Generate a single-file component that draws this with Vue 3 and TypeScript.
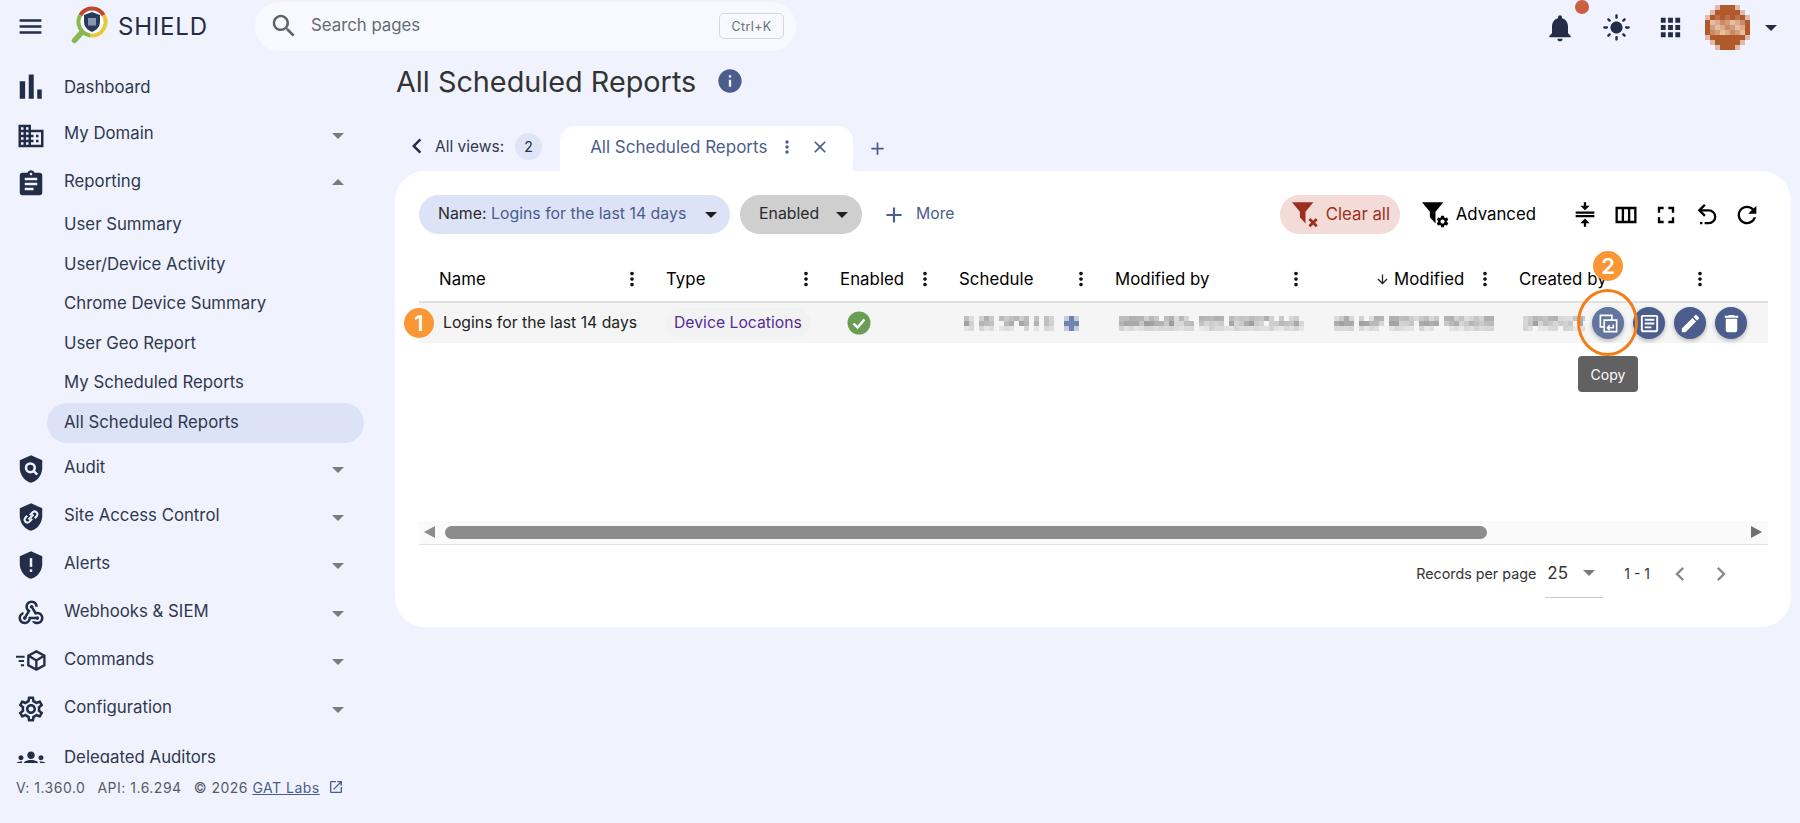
<script setup lang="ts">
const P = {
  menu: 'M3 18h18v-2H3v2zm0-5h18v-2H3v2zm0-7v2h18V6H3z',
  search: 'M15.5 14h-.79l-.28-.27C15.41 12.59 16 11.11 16 9.5 16 5.91 13.09 3 9.5 3S3 5.91 3 9.5 5.91 16 9.5 16c1.61 0 3.09-.59 4.23-1.57l.27.28v.79l5 4.99L20.49 19l-4.99-5zm-6 0C7.01 14 5 11.99 5 9.5S7.01 5 9.5 5 14 7.01 14 9.5 11.99 14 9.5 14z',
  bars: 'M3 5.8h4.3v14H3zM10.2.4h4v19.4h-4zM17 12.4h3.6v7.4H17z',
  domain: 'M12 7V3H2v18h20V7H12zM6 19H4v-2h2v2zm0-4H4v-2h2v2zm0-4H4V9h2v2zm0-4H4V5h2v2zm4 12H8v-2h2v2zm0-4H8v-2h2v2zm0-4H8V9h2v2zm0-4H8V5h2v2zm10 12h-8v-2h2v-2h-2v-2h2v-2h-2V9h8v10zm-2-8h-2v2h2v-2zm0 4h-2v2h2v-2z',
  assignment: 'M19 3h-4.18C14.4 1.84 13.3 1 12 1c-1.3 0-2.4.84-2.82 2H5c-1.1 0-2 .9-2 2v14c0 1.1.9 2 2 2h14c1.1 0 2-.9 2-2V5c0-1.1-.9-2-2-2zm-7 0c.55 0 1 .45 1 1s-.45 1-1 1-1-.45-1-1 .45-1 1-1zm2 14H7v-2h7v2zm3-4H7v-2h10v2zm0-4H7V7h10v2z',
  webhook: 'M10 15h5.88c.27-.31.67-.5 1.12-.5.83 0 1.5.67 1.5 1.5s-.67 1.5-1.5 1.5c-.44 0-.84-.19-1.12-.5H11.9c-.46 2.28-2.48 4-4.9 4-2.76 0-5-2.24-5-5 0-2.42 1.72-4.44 4-4.9v2.07c-1.16.41-2 1.53-2 2.83 0 1.65 1.35 3 3 3s3-1.35 3-3v-1zm2.5-11c1.65 0 3 1.35 3 3h2c0-2.76-2.24-5-5-5s-5 2.24-5 5c0 1.43.6 2.71 1.55 3.62l-2.35 3.9c-.68.14-1.2.75-1.2 1.48 0 .83.67 1.5 1.5 1.5s1.5-.67 1.5-1.5c0-.16-.02-.31-.07-.45l3.38-5.63C10.49 9.61 9.5 8.42 9.5 7c0-1.65 1.35-3 3-3zm4.5 9c-.64 0-1.23.2-1.72.54l-3.05-5.07C11.53 8.35 11 7.74 11 7c0-.83.67-1.5 1.5-1.5S14 6.17 14 7c0 .15-.02.29-.06.43l2.19 3.65c.28-.05.57-.08.87-.08 2.76 0 5 2.24 5 5s-2.24 5-5 5c-1.85 0-3.47-1.01-4.33-2.5h2.67c.48.32 1.05.5 1.66.5 1.65 0 3-1.35 3-3s-1.35-3-3-3z',
  settings: 'M19.43 12.98c.04-.32.07-.64.07-.98 0-.34-.03-.66-.07-.98l2.11-1.65c.19-.15.24-.42.12-.64l-2-3.46c-.09-.16-.26-.25-.44-.25-.06 0-.12.01-.17.03l-2.49 1c-.52-.4-1.08-.73-1.69-.98l-.38-2.65C14.46 2.18 14.25 2 14 2h-4c-.25 0-.46.18-.49.42l-.38 2.65c-.61.25-1.17.59-1.69.98l-2.49-1c-.06-.02-.12-.03-.18-.03-.17 0-.34.09-.43.25l-2 3.46c-.13.22-.07.49.12.64l2.11 1.65c-.04.32-.07.65-.07.98 0 .33.03.66.07.98l-2.11 1.65c-.19.15-.24.42-.12.64l2 3.46c.09.16.26.25.44.25.06 0 .12-.01.17-.03l2.49-1c.52.4 1.08.73 1.69.98l.38 2.65c.03.24.24.42.49.42h4c.25 0 .46-.18.49-.42l.38-2.65c.61-.25 1.17-.59 1.69-.98l2.49 1c.06.02.12.03.18.03.17 0 .34-.09.43-.25l2-3.46c.12-.22.07-.49-.12-.64l-2.11-1.65zm-1.98-1.71c.04.31.05.52.05.73 0 .21-.02.43-.05.73l-.14 1.13.89.7 1.08.84-.7 1.21-1.27-.51-1.04-.42-.9.68c-.43.32-.84.56-1.25.73l-1.06.43-.16 1.13-.2 1.35h-1.4l-.19-1.35-.16-1.13-1.06-.43c-.43-.18-.83-.41-1.23-.71l-.91-.7-1.06.43-1.27.51-.7-1.21 1.08-.84.89-.7-.14-1.13c-.03-.31-.05-.54-.05-.74s.02-.43.05-.73l.14-1.13-.89-.7-1.08-.84.7-1.21 1.27.51 1.04.42.9-.68c.43-.32.84-.56 1.25-.73l1.06-.43.16-1.13.2-1.35h1.39l.19 1.35.16 1.13 1.06.43c.43.18.83.41 1.23.71l.91.7 1.06-.43 1.27-.51.7 1.21-1.07.85-.89.7.14 1.13zM12 8c-2.21 0-4 1.79-4 4s1.79 4 4 4 4-1.79 4-4-1.79-4-4-4zm0 6c-1.1 0-2-.9-2-2s.9-2 2-2 2 .9 2 2-.9 2-2 2z',
  groups: 'M4 13c1.1 0 2-.9 2-2s-.9-2-2-2-2 .9-2 2 .9 2 2 2zm1.13 1.1c-.37-.06-.74-.1-1.13-.1-.99 0-1.93.21-2.78.58C.48 14.9 0 15.62 0 16.43V18h4.5v-1.61c0-.83.23-1.61.63-2.29zM20 13c1.1 0 2-.9 2-2s-.9-2-2-2-2 .9-2 2 .9 2 2 2zm4 3.43c0-.81-.48-1.53-1.22-1.85-.85-.37-1.79-.58-2.78-.58-.39 0-.76.04-1.13.1.4.68.63 1.46.63 2.29V18H24v-1.57zm-7.76-2.78c-1.17-.52-2.61-.9-4.24-.9-1.63 0-3.07.39-4.24.9C6.68 14.13 6 15.21 6 16.39V18h12v-1.61c0-1.18-.68-2.26-1.76-2.74zM12 12c1.66 0 3-1.34 3-3s-1.34-3-3-3-3 1.34-3 3 1.34 3 3 3z',
  bell: 'M12 22c1.1 0 2-.9 2-2h-4c0 1.1.9 2 2 2zm6-6v-5c0-3.07-1.63-5.64-4.5-6.32V4c0-.83-.67-1.5-1.5-1.5s-1.5.67-1.5 1.5v.68C7.64 5.36 6 7.92 6 11v5l-2 2v1h16v-1l-2-2z',
  sun: 'M12 7c-2.76 0-5 2.24-5 5s2.24 5 5 5 5-2.24 5-5-2.24-5-5-5zM2 13h2c.55 0 1-.45 1-1s-.45-1-1-1H2c-.55 0-1 .45-1 1s.45 1 1 1zm18 0h2c.55 0 1-.45 1-1s-.45-1-1-1h-2c-.55 0-1 .45-1 1s.45 1 1 1zM11 2v2c0 .55.45 1 1 1s1-.45 1-1V2c0-.55-.45-1-1-1s-1 .45-1 1zm0 18v2c0 .55.45 1 1 1s1-.45 1-1v-2c0-.55-.45-1-1-1s-1 .45-1 1zM5.99 4.58c-.39-.39-1.03-.39-1.41 0-.39.39-.39 1.03 0 1.41l1.06 1.06c.39.39 1.03.39 1.41 0s.39-1.03 0-1.41L5.99 4.58zm12.37 12.37c-.39-.39-1.03-.39-1.41 0-.39.39-.39 1.03 0 1.41l1.06 1.06c.39.39 1.03.39 1.41 0 .39-.39.39-1.03 0-1.41l-1.06-1.06zm1.06-10.96c.39-.39.39-1.03 0-1.41-.39-.39-1.03-.39-1.41 0l-1.06 1.06c-.39.39-.39 1.03 0 1.41s1.03.39 1.41 0l1.06-1.06zM7.05 18.36c.39-.39.39-1.03 0-1.41-.39-.39-1.03-.39-1.41 0l-1.06 1.06c-.39.39-.39 1.03 0 1.41s1.03.39 1.41 0l1.06-1.06z',
  apps: 'M4 8h4V4H4v4zm6 12h4v-4h-4v4zm-6 0h4v-4H4v4zm0-6h4v-4H4v4zm6 0h4v-4h-4v4zm6-10v4h4V4h-4zm-6 4h4V4h-4v4zm6 6h4v-4h-4v4zm0 6h4v-4h-4v4z',
  info: 'M12 2C6.48 2 2 6.48 2 12s4.48 10 10 10 10-4.48 10-10S17.52 2 12 2zm1 15h-2v-6h2v6zm0-8h-2V7h2v2z',
  left: 'M15.41 7.41L14 6l-6 6 6 6 1.41-1.41L10.83 12z',
  right: 'M10 6L8.59 7.41 13.17 12l-4.58 4.59L10 18l6-6z',
  close: 'M19 6.41L17.59 5 12 10.59 6.41 5 5 6.41 10.59 12 5 17.59 6.41 19 12 13.41 17.59 19 19 17.59 13.41 12z',
  add: 'M19 13h-6v6h-2v-6H5v-2h6V5h2v6h6v2z',
  kebab: 'M12 8c1.1 0 2-.9 2-2s-.9-2-2-2-2 .9-2 2 .9 2 2 2zm0 2c-1.1 0-2 .9-2 2s.9 2 2 2 2-.9 2-2-.9-2-2-2zm0 6c-1.1 0-2 .9-2 2s.9 2 2 2 2-.9 2-2-.9-2-2-2z',
  down: 'M20 12l-1.41-1.41L13 16.17V4h-2v12.17l-5.58-5.59L4 12l8 8 8-8z',
  compress: 'M8 19h3v3h2v-3h3l-4-4-4 4zm8-15h-3V1h-2v3H8l4 4 4-4zM4 9v2h16V9H4zm0 3h16v2H4v-2z',
  columns: 'M3 5v14h18V5H3zm5.33 12H5V7h3.33v10zm5.34 0h-3.33V7h3.33v10zM19 17h-3.33V7H19v10z',
  fullscreen: 'M7 14H5v5h5v-2H7v-3zm-2-4h2V7h3V5H5v5zm12 7h-3v2h5v-5h-2v3zM14 5v2h3v3h2V5h-5z',
  undo: 'M13.5 7A6.5 6.5 0 0 1 20 13.5 6.5 6.5 0 0 1 13.5 20H10v-2h3.5c2.5 0 4.5-2 4.5-4.5S16 9 13.5 9H7.83l3.08 3.09L9.5 13.5 4 8l5.5-5.5 1.42 1.41L7.83 7h5.67M6 18h2v2H6v-2z',
  refresh: 'M17.65 6.35C16.2 4.9 14.21 4 12 4c-4.42 0-7.99 3.58-7.99 8s3.57 8 7.99 8c3.73 0 6.84-2.55 7.73-6h-2.08c-.82 2.33-3.04 4-5.65 4-3.31 0-6-2.69-6-6s2.69-6 6-6c1.66 0 3.14.69 4.22 1.78L13 11h7V4l-2.35 2.35z',
  del: 'M6 19c0 1.1.9 2 2 2h8c1.1 0 2-.9 2-2V7H6v12zM19 4h-3.5l-1-1h-5l-1 1H5v2h14V4z',
  edit: 'M3 17.25V21h3.75L17.81 9.94l-3.75-3.75L3 17.25zM20.71 7.04c.39-.39.39-1.02 0-1.41l-2.34-2.34c-.39-.39-1.02-.39-1.41 0l-1.83 1.83 3.75 3.75 1.83-1.83z',
  article: 'M19 5v14H5V5h14m0-2H5c-1.1 0-2 .9-2 2v14c0 1.1.9 2 2 2h14c1.1 0 2-.9 2-2V5c0-1.1-.9-2-2-2zM14 17H7v-2h7v2zm3-4H7v-2h10v2zm0-4H7V7h10v2z',
  ext: 'M19 19H5V5h7V3H5c-1.11 0-2 .9-2 2v14c0 1.1.89 2 2 2h14c1.1 0 2-.9 2-2v-7h-2v7zM14 3v2h3.59l-9.83 9.83 1.41 1.41L19 6.41V10h2V3h-7z',
  shield: 'M12 1L3 5v6c0 5.55 3.84 10.74 9 12 5.16-1.26 9-6.45 9-12V5l-9-4z',
  funnel: 'M2 3h19l-7 8.500V22l-5-5.500V11.500z',
  gear: 'M19.43 12.98c.04-.32.07-.64.07-.98 0-.34-.03-.66-.07-.98l2.11-1.65c.19-.15.24-.42.12-.64l-2-3.46c-.12-.22-.39-.3-.61-.22l-2.49 1c-.52-.4-1.08-.73-1.69-.98l-.38-2.65C14.46 2.18 14.25 2 14 2h-4c-.25 0-.46.18-.49.42l-.38 2.65c-.61.25-1.17.59-1.69.98l-2.49-1c-.23-.09-.49 0-.61.22l-2 3.46c-.13.22-.07.49.12.64l2.11 1.65c-.04.32-.07.65-.07.98 0 .33.03.66.07.98l-2.11 1.65c-.19.15-.24.42-.12.64l2 3.46c.12.22.39.3.61.22l2.49-1c.52.4 1.08.73 1.69.98l.38 2.65c.03.24.24.42.49.42h4c.25 0 .46-.18.49-.42l.38-2.65c.61-.25 1.17-.59 1.69-.98l2.49 1c.23.09.49 0 .61-.22l2-3.46c.12-.22.07-.49-.12-.64l-2.11-1.65zM12 15.5c-1.93 0-3.5-1.57-3.5-3.5s1.57-3.5 3.5-3.5 3.5 1.57 3.5 3.5-1.57 3.5-3.5 3.5z'
}

const columns = [
  { label: 'Type', w: 174 },
  { label: 'Enabled', w: 119 },
  { label: 'Schedule', w: 156 },
  { label: 'Modified by', w: 215 }
]

// small deterministic noise for the pixelated (redacted) cells
function mosaic(w: number, rows: number, seed: number, gaps: number[] = []) {
  const cell = 5
  const out: { x: number; y: number; o: number }[] = []
  let s = seed
  for (let x = 0; x < w; x += cell) {
    for (let y = 0; y < rows; y++) {
      s = (s * 9301 + 49297) % 233280
      const r = s / 233280
      if (gaps.includes(x)) continue
      const edge = y === 2 ? 0.4 : y === 0 ? 0.8 : 1
      if (r < 0.1) continue
      out.push({ x, y: y * cell, o: (0.14 + r * 0.42) * edge })
    }
  }
  return out
}
const blurs = {
  sched: mosaic(90, 3, 11, [10, 30, 65, 75]),
  modBy: mosaic(185, 3, 37, [75]),
  mod: mosaic(160, 3, 73, [20, 50, 105]),
  created: mosaic(62, 3, 101)
}

const avatar: { x: number; y: number; c: string }[] = (() => {
  const out: { x: number; y: number; c: string }[] = []
  const cell = 5
  for (let r = 0; r < 9; r++) {
    for (let c = 0; c < 9; c++) {
      const dx = c - 4, dy = r - 4
      const d = Math.sqrt(dx * dx + dy * dy)
      if (d > 4.8) continue
      let col = '#b05a2c'
      if (d > 4.2) col = '#dfb9ac'
      else if (r >= 3 && r <= 5 && Math.abs(dx) <= 3) col = ['#c98a6a', '#d59c76', '#e4bda2', '#dca98a'][(r * 3 + c * 5) % 4]
      else if (r === 2 && Math.abs(dx) <= 2 && c % 2 === 0) col = '#bd7147'
      out.push({ x: c * cell, y: r * cell, c: col })
    }
  }
  return out
})()
</script>

<template>
  <div class="page">
    <header class="topbar">
      <svg class="ic menu-ic" viewBox="0 0 24 24"><path :d="P.menu" /></svg>
      <div class="brand">
        <svg class="logo" viewBox="0 0 40 40">
          <path d="M12 26 L4.500 34.500" stroke="#8ab752" stroke-width="5.500" stroke-linecap="round" fill="none" />
          <circle cx="22" cy="16" r="12" fill="#fff" />
          <path d="M10.300 9.250 A13.500 13.500 0 0 1 33.700 9.250" stroke="#c0452c" stroke-width="4" fill="none" />
          <path d="M33.700 9.250 A13.500 13.500 0 0 1 20.250 29.400" stroke="#e9c937" stroke-width="4" fill="none" />
          <path d="M20.250 29.400 A13.500 13.500 0 0 1 10.300 9.250" stroke="#8ab752" stroke-width="4" fill="none" />
          <path d="M22 6 L30 9 V16 C30 21 26 24.500 22 26 C18 24.500 14 21 14 16 V9 Z" fill="#2a3a5c" />
          <rect x="18" y="12" width="8" height="7.500" fill="#8a97ad" />
        </svg>
        <span class="brand-name">SHIELD</span>
      </div>
      <div class="searchbox">
        <svg class="ic search-ic" viewBox="0 0 24 24"><path :d="P.search" /></svg>
        <span class="search-text">Search pages</span>
        <kbd class="kbd">Ctrl+K</kbd>
      </div>
      <div class="top-actions">
        <div class="bell">
          <svg class="ic bell-ic" viewBox="0 0 24 24"><path :d="P.bell" /></svg>
          <span class="dot"></span>
        </div>
        <svg class="ic sun-ic" viewBox="0 0 24 24"><path :d="P.sun" /></svg>
        <svg class="ic apps-ic" viewBox="0 0 24 24"><path :d="P.apps" /></svg>
        <svg class="avatar" viewBox="0 0 45 45" shape-rendering="crispEdges">
          <rect v-for="(a, i) in avatar" :key="i" :x="a.x" :y="a.y" width="5" height="5" :fill="a.c" />
        </svg>
        <span class="caret dark"></span>
      </div>
    </header>

    <div class="body">
      <aside class="side">
        <nav class="nav">
          <div class="nav-row first">
            <svg class="ic nav-ic" viewBox="0 0 24 24"><path :d="P.bars" /></svg>
            <span>Dashboard</span>
          </div>
          <div class="nav-row">
            <svg class="ic nav-ic" viewBox="0 0 24 24"><path :d="P.domain" /></svg>
            <span>My Domain</span><i class="caret"></i>
          </div>
          <div class="nav-row">
            <svg class="ic nav-ic" viewBox="0 0 24 24"><path :d="P.assignment" /></svg>
            <span>Reporting</span><i class="caret up"></i>
          </div>
          <div class="nav-sub">User Summary</div>
          <div class="nav-sub">User/Device Activity</div>
          <div class="nav-sub">Chrome Device Summary</div>
          <div class="nav-sub">User Geo Report</div>
          <div class="nav-sub">My Scheduled Reports</div>
          <div class="nav-sub active">All Scheduled Reports</div>
          <div class="nav-row">
            <svg class="ic nav-ic" viewBox="0 0 24 24">
              <path :d="P.shield" />
              <circle cx="11.500" cy="11" r="3.500" fill="none" stroke="#f0f3fe" stroke-width="2" />
              <path d="M14 13.500 L17 16.500" stroke="#f0f3fe" stroke-width="2" />
            </svg>
            <span>Audit</span><i class="caret"></i>
          </div>
          <div class="nav-row">
            <svg class="ic nav-ic" viewBox="0 0 24 24">
              <path :d="P.shield" />
              <path d="M11 10.500 L13.500 8 a2.300 2.300 0 0 1 3.200 3.200 L15 13 M13 13.500 L10.500 16 a2.300 2.300 0 0 1 -3.200 -3.200 L9 11 M10 14 L14 10" fill="none" stroke="#f0f3fe" stroke-width="1.600" />
            </svg>
            <span>Site Access Control</span><i class="caret"></i>
          </div>
          <div class="nav-row">
            <svg class="ic nav-ic" viewBox="0 0 24 24">
              <path :d="P.shield" />
              <rect x="11" y="6.500" width="2" height="7" fill="#f0f3fe" />
              <rect x="11" y="15.500" width="2" height="2" fill="#f0f3fe" />
            </svg>
            <span>Alerts</span><i class="caret"></i>
          </div>
          <div class="nav-row">
            <svg class="ic nav-ic" viewBox="0 0 24 24"><path :d="P.webhook" /></svg>
            <span>Webhooks &amp; SIEM</span><i class="caret"></i>
          </div>
          <div class="nav-row">
            <svg class="ic nav-ic" viewBox="0 0 28 28">
              <path d="M19 5 L26.500 9 V18 L19 22 L11.500 18 V9 Z M11.800 9.200 L19 13.500 L26.200 9.200 M19 13.500 V22" fill="none" stroke="#232d47" stroke-width="2.200" />
              <path d="M0 9h8v2H0zM2.500 13h5v2h-5zM4.500 17h3v2h-3z" />
            </svg>
            <span>Commands</span><i class="caret"></i>
          </div>
          <div class="nav-row">
            <svg class="ic nav-ic" viewBox="0 0 24 24"><path :d="P.settings" /></svg>
            <span>Configuration</span><i class="caret"></i>
          </div>
          <div class="nav-row last">
            <svg class="ic nav-ic" viewBox="0 0 24 24"><path :d="P.groups" /></svg>
            <span>Delegated Auditors</span>
          </div>
        </nav>
        <footer class="side-foot">
          <span>V: 1.360.0</span><span>API: 1.6.294</span><span>© 2026 <a class="gat">GAT Labs</a></span>
          <svg class="ext" viewBox="0 0 24 24"><path :d="P.ext" /></svg>
        </footer>
      </aside>

      <main class="main">
        <div class="title-row">
          <h1>All Scheduled Reports</h1>
          <svg class="ic info-ic" viewBox="0 0 24 24"><path :d="P.info" /></svg>
        </div>

        <div class="tabs">
          <svg class="ic back-ic" viewBox="0 0 24 24"><path :d="P.left" /></svg>
          <span class="views">All views:</span>
          <span class="count">2</span>
          <div class="tab">
            <span class="tab-name">All Scheduled Reports</span>
            <svg class="ic tab-kebab" viewBox="0 0 24 24"><path :d="P.kebab" /></svg>
            <svg class="ic tab-close" viewBox="0 0 24 24"><path :d="P.close" /></svg>
          </div>
          <svg class="ic tab-add" viewBox="0 0 24 24"><path :d="P.add" /></svg>
        </div>

        <section class="card">
          <div class="toolbar">
            <div class="chip chip-name">
              <span class="k">Name:</span>&nbsp;<span class="v">Logins for the last 14 days</span>
              <i class="caret black"></i>
            </div>
            <div class="chip chip-en">
              <span>Enabled</span>
              <i class="caret black"></i>
            </div>
            <div class="more">
              <svg class="ic more-ic" viewBox="0 0 24 24"><path :d="P.add" /></svg>
              <span>More</span>
            </div>
            <div class="spacer"></div>
            <div class="clear">
              <svg class="fn" viewBox="2 2 24 24">
                <path :d="P.funnel" fill="#9c2f1f" />
                <path d="M17.500 18 L24 24.500 M24 18 L17.500 24.500" stroke="#9c2f1f" stroke-width="2.500" />
              </svg>
              <span>Clear all</span>
            </div>
            <div class="adv">
              <svg class="fn" viewBox="2 2 24 24">
                <path :d="P.funnel" fill="#000" />
                <g transform="translate(14 14) scale(.52)"><path :d="P.gear" fill="#000" /></g>
              </svg>
              <span>Advanced</span>
            </div>
            <div class="tools">
              <svg class="ic tool" viewBox="0 0 24 24"><path :d="P.compress" /></svg>
              <svg class="ic tool" viewBox="0 0 24 24"><path :d="P.columns" /></svg>
              <svg class="ic tool" viewBox="0 0 24 24"><path :d="P.fullscreen" /></svg>
              <svg class="ic tool" viewBox="0 0 24 24"><path :d="P.undo" /></svg>
              <svg class="ic tool" viewBox="0 0 24 24"><path :d="P.refresh" /></svg>
            </div>
          </div>

          <div class="table">
            <div class="thead">
              <div class="th th-name"><span>Name</span><svg class="ic kb" viewBox="0 0 24 24"><path :d="P.kebab" /></svg></div>
              <div v-for="c in columns" :key="c.label" class="th" :style="{ width: c.w + 'px' }"><span>{{ c.label }}</span><svg class="ic kb" viewBox="0 0 24 24"><path :d="P.kebab" /></svg></div>
              <div class="th th-mod"><svg class="ic arrow" viewBox="0 0 24 24"><path :d="P.down" /></svg><span>Modified</span><svg class="ic kb" viewBox="0 0 24 24"><path :d="P.kebab" /></svg></div>
              <div class="th th-created"><span>Created by</span><svg class="ic kb" viewBox="0 0 24 24"><path :d="P.kebab" /></svg></div>
            </div>
            <div class="trow">
              <div class="td c-name"><span>Logins for the last 14 days</span></div>
              <div class="td c-type"><span class="type-chip">Device Locations</span></div>
              <div class="td c-en">
                <svg class="check" viewBox="0 0 24 24">
                  <circle cx="12" cy="12" r="11.500" fill="#6b9e55" />
                  <path d="M6.500 12.500 L10.500 16.500 L17.500 8.500" fill="none" stroke="#fff" stroke-width="2.400" />
                </svg>
              </div>
              <div class="td c-sched">
                <svg class="bl" width="90" height="15" shape-rendering="crispEdges"><rect v-for="(r, i) in blurs.sched" :key="i" :x="r.x" :y="r.y" width="5" height="5" fill="#555" :fill-opacity="r.o" /></svg>
                <svg class="bl plus" width="15" height="15" shape-rendering="crispEdges">
                  <rect width="15" height="15" fill="#6e83ad" fill-opacity=".35" />
                  <path d="M5 0h5v15H5z" fill="#6e83ad" /><path d="M0 5h15v5H0z" fill="#6e83ad" />
                </svg>
              </div>
              <div class="td c-modby">
                <svg class="bl" width="185" height="15" shape-rendering="crispEdges"><rect v-for="(r, i) in blurs.modBy" :key="i" :x="r.x" :y="r.y" width="5" height="5" fill="#555" :fill-opacity="r.o" /></svg>
              </div>
              <div class="td c-mod">
                <svg class="bl" width="160" height="15" shape-rendering="crispEdges"><rect v-for="(r, i) in blurs.mod" :key="i" :x="r.x" :y="r.y" width="5" height="5" fill="#555" :fill-opacity="r.o" /></svg>
              </div>
              <div class="td c-created">
                <svg class="bl" width="62" height="15" shape-rendering="crispEdges"><rect v-for="(r, i) in blurs.created" :key="i" :x="r.x" :y="r.y" width="5" height="5" fill="#555" :fill-opacity="r.o" /></svg>
              </div>
              <div class="td c-actions">
                <span class="act hover">
                  <svg class="ic act-ic" viewBox="0 0 24 24" fill="none">
                    <path d="M15.500 8V3.500H3.500V15.500H7.500 M7.500 8.500H20.500V20.500H7.500Z" fill="none" stroke="#fff" stroke-width="1.700" />
                    <path d="M17 13V16.500H11 M13.300 14L10.800 16.500L13.300 19" fill="none" stroke="#fff" stroke-width="1.600" />
                  </svg>
                </span>
                <span class="act"><svg class="ic act-ic" viewBox="0 0 24 24"><path :d="P.article" fill="#fff" /></svg></span>
                <span class="act"><svg class="ic act-ic" viewBox="0 0 24 24"><path :d="P.edit" fill="#fff" /></svg></span>
                <span class="act"><svg class="ic act-ic" viewBox="0 0 24 24"><path :d="P.del" fill="#fff" /></svg></span>
              </div>
            </div>
            <div class="num num1">1</div>
            <div class="num num2">2</div>
            <div class="ring"></div>
            <div class="tip">Copy</div>
          </div>

          <div class="hscroll">
            <span class="sb-l"></span>
            <div class="sb-track"><div class="sb-thumb"></div></div>
            <span class="sb-r"></span>
          </div>

          <div class="pager">
            <span class="rpp">Records per page</span>
            <div class="rpp-select"><span>25</span><i class="caret"></i></div>
            <span class="range">1 - 1</span>
            <svg class="ic pg" viewBox="0 0 24 24"><path :d="P.left" /></svg>
            <svg class="ic pg" viewBox="0 0 24 24"><path :d="P.right" /></svg>
          </div>
        </section>
      </main>
    </div>
  </div>
</template>

<style>
html, body { margin: 0; background: #f0f3fe; }
</style>

<style scoped>
.page {
  width: 1800px;
  height: 823px;
  overflow: hidden;
  background: #f0f3fe;
  font-family: Inter, "Noto Sans", sans-serif;
  color: #232d47;
  display: flex;
  flex-direction: column;
}
.ic { display: block; fill: currentColor; flex: none; }

/* top bar */
.topbar { height: 52px; flex: none; display: flex; align-items: center; padding: 0 0 0 15.5px; }
.menu-ic { width: 29px; height: 29px; color: #232d47; }
.brand { display: flex; align-items: center; margin-left: 25.5px; width: 185px; flex: none; }
.logo { width: 40px; height: 40px; flex: none; }
.brand-name { font-size: 24px; letter-spacing: .8px; margin-left: 8px; color: #232d47; }
.searchbox {
  width: 541px; height: 49px; border-radius: 25px; background: #f8f9ff; flex: none;
  display: flex; align-items: center; box-sizing: border-box; padding: 0 12px 0 14px;
}
.search-ic { width: 30px; height: 30px; color: #5f6368; }
.search-text { margin-left: 12px; font-size: 16.8px; color: #666b75; flex: 1; padding-bottom: 2px; }
.kbd {
  font-family: Inter, sans-serif; font-size: 12.500px; color: #6c6f75; letter-spacing: .4px;
  border: 1px solid #d6d8de; border-radius: 5px; width: 65px; height: 26px;
  display: flex; align-items: center; justify-content: center; box-sizing: border-box;
}
.top-actions { margin-left: auto; display: flex; align-items: center; padding-right: 23px; margin-top: 3px; }
.bell { position: relative; margin-right: 25.5px; }
.bell-ic { width: 32px; height: 32px; color: #232d47; }
.sun-ic { width: 29px; height: 29px; color: #232d47; margin-right: 25px; }
.apps-ic { width: 29px; height: 29px; color: #232d47; margin-right: 20.5px; }
.dot { position: absolute; left: 31px; top: -12px; width: 14px; height: 14px; border-radius: 50%; background: #c9603f; }
.avatar { width: 45px; height: 45px; flex: none; }
.caret {
  display: inline-block; width: 0; height: 0;
  border-left: 6px solid transparent; border-right: 6px solid transparent;
  border-top: 6px solid #7a7a7a; flex: none;
}
.caret.up { border-top: 0; border-bottom: 6px solid #7a7a7a; }
.caret.dark { border-top-color: #232d47; margin-left: 15px; }
.caret.black { border-top-color: #1f1f1f; }

/* sidebar */
.body { flex: 1; display: flex; min-height: 0; }
.side { width: 395px; flex: none; display: flex; flex-direction: column; }
.nav { height: 711px; overflow: hidden; flex: none; padding-top: 12px; box-sizing: border-box; }
.nav-row {
  display: flex; align-items: center; height: 48px; margin-left: 15.5px; width: 348.5px;
  font-size: 16.8px; color: #2f3850; position: relative;
}
.nav-row.first { height: 45px; }
.nav-row.last { margin-top: 2px; }
.nav-row span { margin-left: 18.5px; }
.nav-row .caret { position: absolute; right: 20px; top: 24px; }
.nav-row .caret.up { top: 22px; }
.nav-ic { width: 30px; height: 30px; color: #232d47; margin-top: 5px; }
.nav-sub {
  margin-left: 47px; width: 317px; height: 39.600px; line-height: 39.600px; padding-left: 17px;
  box-sizing: border-box; font-size: 16.8px; color: #2f3850;
}
.nav-sub.active { background: #dde3f6; border-radius: 20px; }
.side-foot {
  display: flex; align-items: center; gap: 12px; padding-left: 16px; height: 20px; margin-top: 14px;
  font-size: 14px; color: #555b6a; letter-spacing: .5px; white-space: nowrap;
}
.gat { color: #4a5d8d; text-decoration: underline; }
.ext { width: 16px; height: 16px; fill: #4a5d8d; margin-left: -4px; }

/* main */
.main { flex: 1; min-width: 0; padding-right: 9px; }
.title-row { display: flex; align-items: center; height: 58px; padding-left: 1px; box-sizing: border-box; }
h1 { margin: 0; font-weight: 400; font-size: 28.800px; color: #333; }
.info-ic { width: 28px; height: 28px; margin-left: 20px; color: #4b5d8c; }
.tabs { height: 61px; display: flex; align-items: center; position: relative; }
.back-ic { width: 30px; height: 30px; margin-left: 7px; color: #232d47; margin-top: 11px; }
.views { font-size: 15.500px; margin-left: 3px; color: #2f3850; margin-top: 11px; white-space: nowrap; }
.count {
  width: 27px; height: 27px; flex: none; border-radius: 50%; background: #dfe5f6; font-size: 14px;
  display: flex; align-items: center; justify-content: center; margin-left: 11px; margin-top: 11px;
}
.tab {
  width: 293px; height: 45px; background: #fff; border-radius: 15px 15px 0 0; flex: none;
  margin: 16px 0 0 18px; display: flex; align-items: center; box-sizing: border-box; padding: 0 0 0 30px;
}
.tab-name { font-size: 17px; color: #4b5d8c; margin-top: -4px; white-space: nowrap; }
.tab-kebab { width: 20px; height: 20px; color: #4b5d8c; margin-left: 9.5px; margin-top: -4px; }
.tab-close { width: 20px; height: 20px; color: #4b5d8c; margin-left: 13.5px; margin-top: -4px; }
.tab-add { width: 21px; height: 21px; margin-left: 14px; margin-top: 15px; color: #4b5d8c; }
.card { background: #fff; border-radius: 30px; height: 456px; box-sizing: border-box; padding: 24px 23px 0 24px; display: flex; flex-direction: column; }

.toolbar { display: flex; align-items: center; height: 39px; white-space: nowrap; }
.chip {
  height: 39px; border-radius: 20px; display: flex; align-items: center; box-sizing: border-box; flex: none;
  font-size: 15.850px; padding-bottom: 2px !important;
}
.chip-name { width: 311px; background: #dde3f6; padding: 0 13px 0 19px; }
.chip-name .k { color: #2a2a2a; }
.chip-name .v { color: #4b5d8c; }
.chip-name .caret { margin-left: auto; margin-top: 2px; }
.chip-en { width: 122px; margin-left: 10px; background: #cfcfcf; padding: 0 14px 0 19px; color: #2a2a2a; justify-content: space-between; }
.chip-en .caret { margin-top: 2px; }
.more { display: flex; align-items: center; margin-left: 19px; font-size: 15.750px; color: #4b5d8c; }
.more span { padding-bottom: 2px; }
.more-ic { width: 26px; height: 26px; margin-right: 9px; }
.spacer { flex: 1; }
.clear {
  width: 120px; height: 39px; border-radius: 20px; background: #f3dcd7; color: #9c2f1f; flex: none;
  display: flex; align-items: center; box-sizing: border-box; padding-left: 12px; font-size: 16.8px;
}
.fn { width: 27px; height: 27px; flex: none; }
.clear span { margin-left: 7px; padding-bottom: 2px; }
.adv { display: flex; align-items: center; margin-left: 22px; font-size: 16.8px; color: #000; }
.adv span { margin-left: 7px; padding-bottom: 2px; }
.tools { display: flex; align-items: center; margin-left: 35px; gap: 12.500px; margin-right: 7px; }
.tool { width: 28px; height: 28px; color: #000; }

.table { position: relative; margin-top: 23px; }
.thead { display: flex; height: 46px; box-sizing: border-box; align-items: center; border-bottom: 2px solid #e0e0e0; }
.th {
  display: flex; align-items: center; justify-content: space-between; font-size: 16.8px; color: #000;
  flex: none; box-sizing: border-box; padding: 0 4px 0 19px; white-space: nowrap;
}
.th span { letter-spacing: .05px; }
.th-name { width: 228px; padding-left: 20px; }
.th-mod { width: 189px; padding-left: 64px; justify-content: flex-start; }
.th-mod .kb { margin-left: auto; }
.th-created { width: 215px; }
.arrow { width: 15px; height: 15px; margin-right: 4px; color: #222; }
.kb { width: 22px; height: 22px; color: #111; }
.trow { display: flex; height: 40px; align-items: center; background: #f5f5f5; font-size: 15.750px; color: #333; white-space: nowrap; }
.td { flex: none; display: flex; align-items: center; box-sizing: border-box; }
.c-name { width: 246px; padding-left: 24px; color: #222; }
.c-name span { padding-bottom: 2px; }
.c-type { width: 182px; }
.type-chip { background: #f2f2f2; color: #552c96; height: 30px; box-sizing: border-box; padding: 0 9px 2px; border-radius: 15px; display: flex; align-items: center; }
.c-en { width: 117px; }
.check { width: 24px; height: 24px; }
.c-sched { width: 155px; }
.bl { display: block; flex: none; }
.plus { margin-left: 10px; }
.c-modby { width: 215px; }
.c-mod { width: 189px; }
.c-created { width: 69px; overflow: hidden; }
.c-actions { gap: 9px; }
.act {
  width: 32px; height: 32px; border-radius: 50%; background: #4b5d8c; display: flex; align-items: center; justify-content: center;
  box-shadow: 0 2px 4px rgba(0,0,0,.25);
}
.act.hover { background: #64769e; }
.act-ic { width: 23px; height: 23px; }
.num {
  position: absolute; width: 30px; height: 30px; border-radius: 50%; background: #fa9633; color: #fff;
  font-size: 22px; font-weight: 600; display: flex; align-items: center; justify-content: center;
}
.num1 { left: -15px; top: 51px; }
.num2 { left: 1174px; top: -6px; z-index: 2; }
.ring {
  position: absolute; left: 1158px; top: 32px; width: 61px; height: 67px; box-sizing: border-box;
  border: 3px solid #f57c14; border-radius: 50%;
}
.tip {
  position: absolute; left: 1159px; top: 99px; width: 60px; height: 36px; border-radius: 4px;
  background: #616161; color: #fff; font-size: 14px; display: flex; align-items: center; justify-content: center;
}

.hscroll {
  margin-top: 178px; height: 24px; box-sizing: border-box; background: #fafafa; border-bottom: 1px solid #e0e0e0; display: flex; align-items: center; position: relative;
}
.sb-track { flex: 1; padding: 0 20px 0 26px; }
.sb-thumb { width: 1042px; height: 13px; border-radius: 7px; background: #8c8c8c; }
.sb-l, .sb-r { width: 0; height: 0; position: absolute; top: 5px; border-top: 6.500px solid transparent; border-bottom: 6.500px solid transparent; }
.sb-l { left: 5px; border-right: 11px solid #8c8c8c; }
.sb-r { right: 6px; border-left: 11px solid #707070; }

.pager { display: flex; align-items: center; height: 57px; padding-right: 33px; justify-content: flex-end; }
.rpp { font-size: 14.300px; color: #333; }
.rpp-select { width: 58px; height: 48px; margin-left: 9px; box-sizing: border-box; border-bottom: 1px solid #ccc; display: flex; align-items: center; justify-content: space-between; padding: 0 8px 0 2px; font-size: 17px; color: #333; }
.range { font-size: 14px; color: #333; margin-left: 21px; }
.pg { width: 28px; height: 28px; color: #8a8a8a; margin-left: 13px; }
.range + .pg { margin-left: 16px; }
</style>
